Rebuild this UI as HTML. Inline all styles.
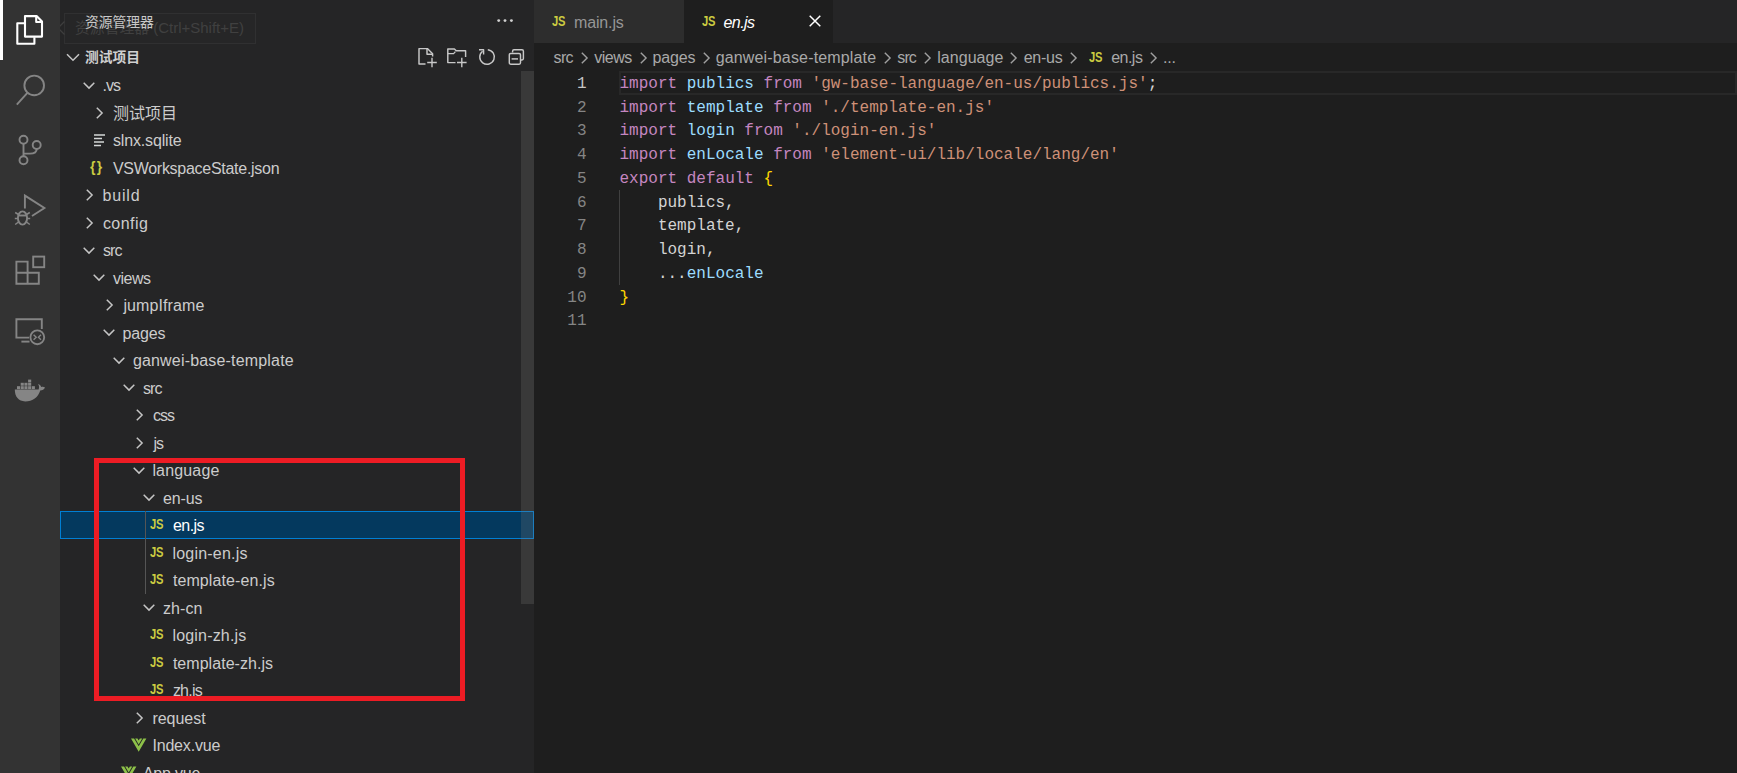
<!DOCTYPE html>
<html lang="zh-CN"><head><meta charset="utf-8"><title>en.js - 测试项目 - Visual Studio Code</title>
<style>
html,body{margin:0;padding:0;background:#1e1e1e;}
body{width:1737px;height:773px;overflow:hidden;position:relative;font-family:"Liberation Sans","Noto Sans CJK SC",sans-serif;color:#ccc;}
#root{position:absolute;left:0;top:0;width:1737px;height:773px;overflow:hidden;}
#act{position:absolute;left:0;top:0;width:60px;height:773px;background:#333333;}
#act .bar{position:absolute;left:0;top:0;width:2.5px;height:60px;background:#fff;}
#act svg{position:absolute;}
#side{position:absolute;left:60px;top:0;width:474px;height:773px;background:#252526;}
#tree{position:absolute;left:-60px;top:0;width:594px;height:773px;overflow:hidden;}
.lbl{position:absolute;height:27.5px;line-height:27.5px;font-size:16px;color:#cccccc;white-space:pre;}
.lbl.sel{color:#fff;}
.chev{position:absolute;overflow:visible;}
.ico{position:absolute;height:27.5px;line-height:27.5px;font-weight:bold;white-space:pre;}
.ico.js{color:#cbcb41;font-size:14px;letter-spacing:-0.3px;transform:scaleX(0.8);transform-origin:0 50%;display:inline-block;}
.ico.json{color:#cbcb41;font-size:14px;letter-spacing:1.5px;}
.selrow{position:absolute;left:60px;width:474px;height:27.5px;background:#04395e;box-sizing:border-box;border:1px solid #007fd4;}
#ed{position:absolute;left:534px;top:0;width:1203px;height:773px;background:#1e1e1e;}
#tabs{position:absolute;left:0;top:0;width:1203px;height:42.8px;background:#252526;}
.tab{position:absolute;top:0;height:42.8px;}
.tab span{position:absolute;top:0.8px;height:43.5px;line-height:44px;white-space:pre;}
.tab span.ico{top:-0.6px;}
.cl{position:absolute;left:619.5px;height:23.75px;line-height:23.75px;font-family:"Liberation Mono",monospace;font-size:16px;color:#d4d4d4;white-space:pre;}
.cl i{font-style:normal;}
.k{color:#c586c0;} .v{color:#9cdcfe;} .s{color:#ce9178;} .b{color:#ffd700;}
.ln{position:absolute;left:534px;width:52.5px;text-align:right;height:23.75px;line-height:23.75px;font-family:"Liberation Mono",monospace;font-size:16px;color:#858585;white-space:pre;}
.ln.cur{color:#c6c6c6;}
.bc{position:absolute;top:43.75px;height:27.5px;line-height:27.5px;font-size:16px;color:#a9a9a9;white-space:pre;}
</style></head><body><div id="root">

<div id="ed">
 <div id="tabs">
  <div class="tab" style="left:0;width:149.5px;background:#2d2d2d;"><span class="ico js" style="left:18px;">JS</span><span style="left:40px;font-size:16px;letter-spacing:-0.15px;color:#969696">main.js</span></div>
  <div class="tab" style="left:149.5px;width:149.5px;background:#1e1e1e;"><span class="ico js" style="left:18px;">JS</span><span style="left:40px;font-size:16px;letter-spacing:-0.55px;color:#fff;font-style:italic">en.js</span>
   <svg style="position:absolute;left:125.3px;top:14.7px" width="12" height="12" viewBox="0 0 12 12"><path d="M0.7 0.7L11.3 11.3M11.3 0.7L0.7 11.3" stroke="#fff" stroke-width="1.5" fill="none"/></svg>
  </div>
 </div>
</div>
<span class="bc" style="left:553.5px;letter-spacing:-0.614px">src</span>
<span class="bc" style="left:594.3px;letter-spacing:-0.527px">views</span>
<span class="bc" style="left:652.5px;letter-spacing:-0.148px">pages</span>
<span class="bc" style="left:715.7px;letter-spacing:0.157px">ganwei-base-template</span>
<span class="bc" style="left:897.3px;letter-spacing:-0.900px">src</span>
<span class="bc" style="left:937.2px;letter-spacing:0.051px">language</span>
<span class="bc" style="left:1023.7px;letter-spacing:-0.256px">en-us</span>
<span class="bc" style="left:1111.2px;letter-spacing:-0.524px">en.js</span>
<span class="bc" style="left:1163.1px;letter-spacing:-0.245px">...</span>
<svg class="chev" style="left:581.0px;top:51.6px" width="7" height="12" viewBox="0 0 7 12"><path d="M0.8 0.7L6.1 6L0.8 11.3" fill="none" stroke="#a0a0a0" stroke-width="1.4"/></svg>
<svg class="chev" style="left:640.0px;top:51.6px" width="7" height="12" viewBox="0 0 7 12"><path d="M0.8 0.7L6.1 6L0.8 11.3" fill="none" stroke="#a0a0a0" stroke-width="1.4"/></svg>
<svg class="chev" style="left:703.0px;top:51.6px" width="7" height="12" viewBox="0 0 7 12"><path d="M0.8 0.7L6.1 6L0.8 11.3" fill="none" stroke="#a0a0a0" stroke-width="1.4"/></svg>
<svg class="chev" style="left:883.8px;top:51.6px" width="7" height="12" viewBox="0 0 7 12"><path d="M0.8 0.7L6.1 6L0.8 11.3" fill="none" stroke="#a0a0a0" stroke-width="1.4"/></svg>
<svg class="chev" style="left:923.8px;top:51.6px" width="7" height="12" viewBox="0 0 7 12"><path d="M0.8 0.7L6.1 6L0.8 11.3" fill="none" stroke="#a0a0a0" stroke-width="1.4"/></svg>
<svg class="chev" style="left:1009.6px;top:51.6px" width="7" height="12" viewBox="0 0 7 12"><path d="M0.8 0.7L6.1 6L0.8 11.3" fill="none" stroke="#a0a0a0" stroke-width="1.4"/></svg>
<svg class="chev" style="left:1070.4px;top:51.6px" width="7" height="12" viewBox="0 0 7 12"><path d="M0.8 0.7L6.1 6L0.8 11.3" fill="none" stroke="#a0a0a0" stroke-width="1.4"/></svg>
<svg class="chev" style="left:1150.2px;top:51.6px" width="7" height="12" viewBox="0 0 7 12"><path d="M0.8 0.7L6.1 6L0.8 11.3" fill="none" stroke="#a0a0a0" stroke-width="1.4"/></svg>
<span class="ico js" style="left:1088.6px;top:43.75px">JS</span>
<div id="curline" style="position:absolute;left:619px;top:71px;width:1118px;height:23.5px;box-sizing:border-box;border:2px solid #282828;"></div>
<div style="position:absolute;left:619px;top:190px;width:1px;height:95px;background:#404040"></div>
<span class="ln cur" style="top:72.75px">1</span><span class="cl" style="top:72.75px"><i class="k">import</i> <i class="v">publics</i> <i class="k">from</i> <i class="s">'gw-base-language/en-us/publics.js'</i>;</span>
<span class="ln" style="top:96.50px">2</span><span class="cl" style="top:96.50px"><i class="k">import</i> <i class="v">template</i> <i class="k">from</i> <i class="s">'./template-en.js'</i></span>
<span class="ln" style="top:120.25px">3</span><span class="cl" style="top:120.25px"><i class="k">import</i> <i class="v">login</i> <i class="k">from</i> <i class="s">'./login-en.js'</i></span>
<span class="ln" style="top:144.00px">4</span><span class="cl" style="top:144.00px"><i class="k">import</i> <i class="v">enLocale</i> <i class="k">from</i> <i class="s">'element-ui/lib/locale/lang/en'</i></span>
<span class="ln" style="top:167.75px">5</span><span class="cl" style="top:167.75px"><i class="k">export</i> <i class="k">default</i> <i class="b">{</i></span>
<span class="ln" style="top:191.50px">6</span><span class="cl" style="top:191.50px">    publics,</span>
<span class="ln" style="top:215.25px">7</span><span class="cl" style="top:215.25px">    template,</span>
<span class="ln" style="top:239.00px">8</span><span class="cl" style="top:239.00px">    login,</span>
<span class="ln" style="top:262.75px">9</span><span class="cl" style="top:262.75px">    ...<i class="v">enLocale</i></span>
<span class="ln" style="top:286.50px">10</span><span class="cl" style="top:286.50px"><i class="b">}</i></span>
<span class="ln" style="top:310.25px">11</span><span class="cl" style="top:310.25px"></span>

<div id="side">
 <div id="tree">
 <svg class="chev" style="left:82.9px;top:81.8px" width="12" height="7" viewBox="0 0 12 7"><path d="M0.7 0.8L6 6.1L11.3 0.8" fill="none" stroke="#c5c5c5" stroke-width="1.5"/></svg>
<span class="lbl" style="left:102.4px;top:72.25px;letter-spacing:-0.900px">.vs</span>
<svg class="chev" style="left:96.2px;top:106.9px" width="7" height="12" viewBox="0 0 7 12"><path d="M0.8 0.7L6.1 6L0.8 11.3" fill="none" stroke="#c5c5c5" stroke-width="1.5"/></svg>
<span class="lbl" style="left:112.9px;top:99.75px">测试项目</span>
<svg class="chev" style="left:93.9px;top:133.5px" width="12" height="13" viewBox="0 0 12 13"><path d="M0 1h11M0 4.5h8M0 8h10M0 11.5h7" stroke="#d4d7d6" stroke-width="1.6" fill="none"/></svg>
<span class="lbl" style="left:112.9px;top:127.25px;letter-spacing:-0.145px">slnx.sqlite</span>
<span class="ico json" style="left:89.9px;top:153.75px">{}</span>
<span class="lbl" style="left:112.9px;top:154.75px;letter-spacing:-0.277px">VSWorkspaceState.json</span>
<svg class="chev" style="left:86.2px;top:189.4px" width="7" height="12" viewBox="0 0 7 12"><path d="M0.8 0.7L6.1 6L0.8 11.3" fill="none" stroke="#c5c5c5" stroke-width="1.5"/></svg>
<span class="lbl" style="left:102.4px;top:182.25px;letter-spacing:0.873px">build</span>
<svg class="chev" style="left:86.2px;top:216.9px" width="7" height="12" viewBox="0 0 7 12"><path d="M0.8 0.7L6.1 6L0.8 11.3" fill="none" stroke="#c5c5c5" stroke-width="1.5"/></svg>
<span class="lbl" style="left:102.9px;top:209.75px;letter-spacing:0.441px">config</span>
<svg class="chev" style="left:82.9px;top:246.8px" width="12" height="7" viewBox="0 0 12 7"><path d="M0.7 0.8L6 6.1L11.3 0.8" fill="none" stroke="#c5c5c5" stroke-width="1.5"/></svg>
<span class="lbl" style="left:102.9px;top:237.25px;letter-spacing:-0.864px">src</span>
<svg class="chev" style="left:92.9px;top:274.3px" width="12" height="7" viewBox="0 0 12 7"><path d="M0.7 0.8L6 6.1L11.3 0.8" fill="none" stroke="#c5c5c5" stroke-width="1.5"/></svg>
<span class="lbl" style="left:112.9px;top:264.75px;letter-spacing:-0.452px">views</span>
<svg class="chev" style="left:106.2px;top:299.4px" width="7" height="12" viewBox="0 0 7 12"><path d="M0.8 0.7L6.1 6L0.8 11.3" fill="none" stroke="#c5c5c5" stroke-width="1.5"/></svg>
<span class="lbl" style="left:123.4px;top:292.25px;letter-spacing:0.108px">jumpIframe</span>
<svg class="chev" style="left:102.9px;top:329.3px" width="12" height="7" viewBox="0 0 12 7"><path d="M0.7 0.8L6 6.1L11.3 0.8" fill="none" stroke="#c5c5c5" stroke-width="1.5"/></svg>
<span class="lbl" style="left:122.4px;top:319.75px;letter-spacing:-0.098px">pages</span>
<svg class="chev" style="left:112.9px;top:356.8px" width="12" height="7" viewBox="0 0 12 7"><path d="M0.7 0.8L6 6.1L11.3 0.8" fill="none" stroke="#c5c5c5" stroke-width="1.5"/></svg>
<span class="lbl" style="left:132.9px;top:347.25px;letter-spacing:0.178px">ganwei-base-template</span>
<svg class="chev" style="left:122.9px;top:384.3px" width="12" height="7" viewBox="0 0 12 7"><path d="M0.7 0.8L6 6.1L11.3 0.8" fill="none" stroke="#c5c5c5" stroke-width="1.5"/></svg>
<span class="lbl" style="left:142.9px;top:374.75px;letter-spacing:-0.864px">src</span>
<svg class="chev" style="left:136.2px;top:409.4px" width="7" height="12" viewBox="0 0 7 12"><path d="M0.8 0.7L6.1 6L0.8 11.3" fill="none" stroke="#c5c5c5" stroke-width="1.5"/></svg>
<span class="lbl" style="left:152.9px;top:402.25px;letter-spacing:-0.900px">css</span>
<svg class="chev" style="left:136.2px;top:436.9px" width="7" height="12" viewBox="0 0 7 12"><path d="M0.8 0.7L6.1 6L0.8 11.3" fill="none" stroke="#c5c5c5" stroke-width="1.5"/></svg>
<span class="lbl" style="left:153.4px;top:429.75px;letter-spacing:-0.900px">js</span>
<svg class="chev" style="left:132.9px;top:466.8px" width="12" height="7" viewBox="0 0 12 7"><path d="M0.7 0.8L6 6.1L11.3 0.8" fill="none" stroke="#c5c5c5" stroke-width="1.5"/></svg>
<span class="lbl" style="left:152.4px;top:457.25px;letter-spacing:0.165px">language</span>
<svg class="chev" style="left:142.9px;top:494.3px" width="12" height="7" viewBox="0 0 12 7"><path d="M0.7 0.8L6 6.1L11.3 0.8" fill="none" stroke="#c5c5c5" stroke-width="1.5"/></svg>
<span class="lbl" style="left:162.9px;top:484.75px;letter-spacing:-0.081px">en-us</span>
<div class="selrow" style="top:511.00px"></div>
<span class="ico js" style="left:150.0px;top:511.25px">JS</span>
<span class="lbl sel" style="left:172.9px;top:512.25px;letter-spacing:-0.524px">en.js</span>
<span class="ico js" style="left:150.0px;top:538.75px">JS</span>
<span class="lbl" style="left:172.4px;top:539.75px;letter-spacing:0.217px">login-en.js</span>
<span class="ico js" style="left:150.0px;top:566.25px">JS</span>
<span class="lbl" style="left:172.9px;top:567.25px;letter-spacing:0.101px">template-en.js</span>
<svg class="chev" style="left:142.9px;top:604.3px" width="12" height="7" viewBox="0 0 12 7"><path d="M0.7 0.8L6 6.1L11.3 0.8" fill="none" stroke="#c5c5c5" stroke-width="1.5"/></svg>
<span class="lbl" style="left:162.9px;top:594.75px;letter-spacing:0.093px">zh-cn</span>
<span class="ico js" style="left:150.0px;top:621.25px">JS</span>
<span class="lbl" style="left:172.4px;top:622.25px;letter-spacing:0.187px">login-zh.js</span>
<span class="ico js" style="left:150.0px;top:648.75px">JS</span>
<span class="lbl" style="left:172.9px;top:649.75px;letter-spacing:0.039px">template-zh.js</span>
<span class="ico js" style="left:150.0px;top:676.25px">JS</span>
<span class="lbl" style="left:172.9px;top:677.25px;letter-spacing:-0.775px">zh.js</span>
<svg class="chev" style="left:136.2px;top:711.9px" width="7" height="12" viewBox="0 0 7 12"><path d="M0.8 0.7L6.1 6L0.8 11.3" fill="none" stroke="#c5c5c5" stroke-width="1.5"/></svg>
<span class="lbl" style="left:152.4px;top:704.75px;letter-spacing:-0.020px">request</span>
<svg class="chev" style="left:131.4px;top:738.0px" width="15.4" height="14.4" viewBox="0 0 17 15"><path d="M0 0h3.4l5.1 8.8L13.6 0H17L8.5 14.7z" fill="#8dc149"/><path d="M4.6 0h2.6l1.3 2.3L9.8 0h2.6L8.5 6.8z" fill="#8dc149"/></svg>
<span class="lbl" style="left:152.4px;top:732.25px;letter-spacing:-0.173px">Index.vue</span>
<svg class="chev" style="left:121.4px;top:765.5px" width="15.4" height="14.4" viewBox="0 0 17 15"><path d="M0 0h3.4l5.1 8.8L13.6 0H17L8.5 14.7z" fill="#8dc149"/><path d="M4.6 0h2.6l1.3 2.3L9.8 0h2.6L8.5 6.8z" fill="#8dc149"/></svg>
<span class="lbl" style="left:142.9px;top:759.75px;letter-spacing:-0.219px">App.vue</span>
 </div>
 <div id="hdr" style="position:absolute;left:0;top:0;width:474px;height:71.25px;background:#252526;">
  <div style="position:absolute;left:4px;top:13px;width:191.5px;height:30.5px;box-sizing:border-box;border:1px solid #303031;background:#262627;"></div>
  <span style="position:absolute;left:15px;top:12.5px;height:30px;line-height:30px;font-size:14.8px;color:#404040;white-space:pre;">资源管理器<span style="font-size:15px;letter-spacing:0px"> (Ctrl+Shift+E)</span></span>
  <svg style="position:absolute;left:-3px;top:21px" width="8" height="14" viewBox="0 0 8 14"><path d="M7.5 0.5L1 7L7.5 13.5" fill="none" stroke="#3e3e3e" stroke-width="1.3"/></svg>
  <span style="position:absolute;left:25px;top:9px;height:28px;line-height:28px;font-size:13.75px;color:#c8c8c8;white-space:pre;">资源管理器</span>
  <svg style="position:absolute;left:436px;top:18.1px" width="18" height="5" viewBox="0 0 18 5"><circle cx="2.7" cy="2.6" r="1.45" fill="#d0d0d0"/><circle cx="9" cy="2.6" r="1.45" fill="#d0d0d0"/><circle cx="15.4" cy="2.6" r="1.45" fill="#d0d0d0"/></svg>
  <svg style="position:absolute;left:6px;top:53px" width="14" height="9" viewBox="0 0 14 9"><path d="M1 1.2 L7 7.2 L13 1.2" fill="none" stroke="#c5c5c5" stroke-width="1.5"/></svg>
  <span style="position:absolute;left:25px;top:43.75px;height:27.5px;line-height:27.5px;font-size:13.75px;font-weight:bold;color:#d0d0d0;white-space:pre;">测试项目</span>
  <svg style="position:absolute;left:350px;top:40px" width="124" height="32" viewBox="410 40 124 32" fill="none" stroke="#c8c8c8" stroke-width="1.45" stroke-linejoin="round">
   <path d="M425.5 64H419V48.6H427.4L432.6 53.8V56.5"/><path d="M427 48.6V54.2H432.6"/><path d="M427.2 62.5H436.8M432 57.7V67.3" stroke-width="1.4"/>
   <path d="M455.5 62.6H447.8V49H454.4L456.2 50.8H465.6V57"/><path d="M447.8 53.6H453.6L455.4 51.6" stroke-width="1.3"/><path d="M457 62.5H466.6M461.8 57.7V67.3" stroke-width="1.4"/>
   <path d="M482.6 51.2A7.3 7.3 0 1 0 487.8 49.7"/><path d="M479 49.8H483.6V54.4" stroke-width="1.4"/>
   <path d="M512.6 52.4V51.2Q512.6 49.8 514 49.8H522Q523.4 49.8 523.4 51.2V58.6Q523.4 60 522 60H521"/><rect x="509.3" y="53.4" width="11.2" height="10.8" rx="1.4"/><path d="M511.6 58.9H518"/>
  </svg>
</div>
 <div style="position:absolute;left:461.2px;top:71px;width:12.8px;height:533px;background:rgba(121,121,121,0.24);"></div>
 <div style="position:absolute;left:85px;top:511px;width:1px;height:82.5px;background:#555555;"></div>
 <div style="position:absolute;left:34px;top:458px;width:371px;height:243px;box-sizing:border-box;border:5px solid #ed1c24;"></div>
</div>
<div id="act"><div class="bar"></div><svg style="left:0;top:0" width="60" height="773" viewBox="0 0 60 773" fill="none" stroke-linejoin="miter">
 <g stroke="#ffffff" stroke-width="2.1" stroke-linejoin="round">
  <path d="M25 16.1H36.6L42 21.6V36.6H25Z"/><path d="M36.2 16.1V22H42"/><path d="M24.6 23.2H17.3V43.8H34.4V37.2"/>
 </g>
 <g stroke="#858585" stroke-width="1.9">
  <circle cx="34.2" cy="85.4" r="9.8"/><path d="M27.6 92.6L16.8 104.6"/>
  <circle cx="23.5" cy="139.8" r="4"/><circle cx="36.7" cy="145" r="4"/><circle cx="23.5" cy="160.3" r="4"/>
  <path d="M23.5 143.8V156.3"/><path d="M23.5 153.6H30Q36.7 153.6 36.7 149"/>
  <path d="M24.9 208.5V195.6L44.4 208L32 216"/>
  <ellipse cx="22.5" cy="218" rx="4.6" ry="6.6"/><path d="M18 215.5H27"/><path d="M15.2 212.5L18.5 214.5M29.8 212.5L26.5 214.5M14.8 218.5H17.9M30.2 218.5H27.1M15.2 224.5L18.5 222M29.8 224.5L26.5 222" stroke-width="1.5"/>
  <path d="M16.4 261.6H27.6V272.8H38.8V283.8H16.4Z"/><path d="M16.4 272.8H27.6V283.8"/><rect x="33.2" y="256.6" width="11" height="10.6"/>
  <path d="M29 337.6H16.4V319.2H41.8V329"/><path d="M21.4 341.6H29.5"/>
  <circle cx="37.3" cy="337.3" r="6.9"/><path d="M33.6 334.8L36.2 337.3L33.6 339.8M41 334.8L38.4 337.3L41 339.8" stroke-width="1.4"/>
 </g>
 <g fill="#858585" stroke="none">
  <path d="M14.8 389.6H38.6C39.4 387.6 39.2 385.6 38 384C39.6 384.4 40.8 385.6 41.2 387C42.6 386.4 44 386.6 45 387.4C44.2 389.4 42.4 390.4 40.2 390.4C38.4 397 32.6 401.4 25.2 401.4C18.6 401.4 14.8 396.8 14.8 389.6Z"/>
  <rect x="17" y="386.2" width="3.1" height="2.9"/><rect x="20.7" y="386.2" width="3.1" height="2.9"/><rect x="24.4" y="386.2" width="3.1" height="2.9"/><rect x="28.1" y="386.2" width="3.1" height="2.9"/><rect x="31.8" y="386.2" width="3.1" height="2.9"/>
  <rect x="20.7" y="382.8" width="3.1" height="2.9"/><rect x="24.4" y="382.8" width="3.1" height="2.9"/><rect x="28.1" y="382.8" width="3.1" height="2.9"/>
  <rect x="28.1" y="379.6" width="3.1" height="2.8"/>
 </g>
</svg></div>
</div></body></html>
